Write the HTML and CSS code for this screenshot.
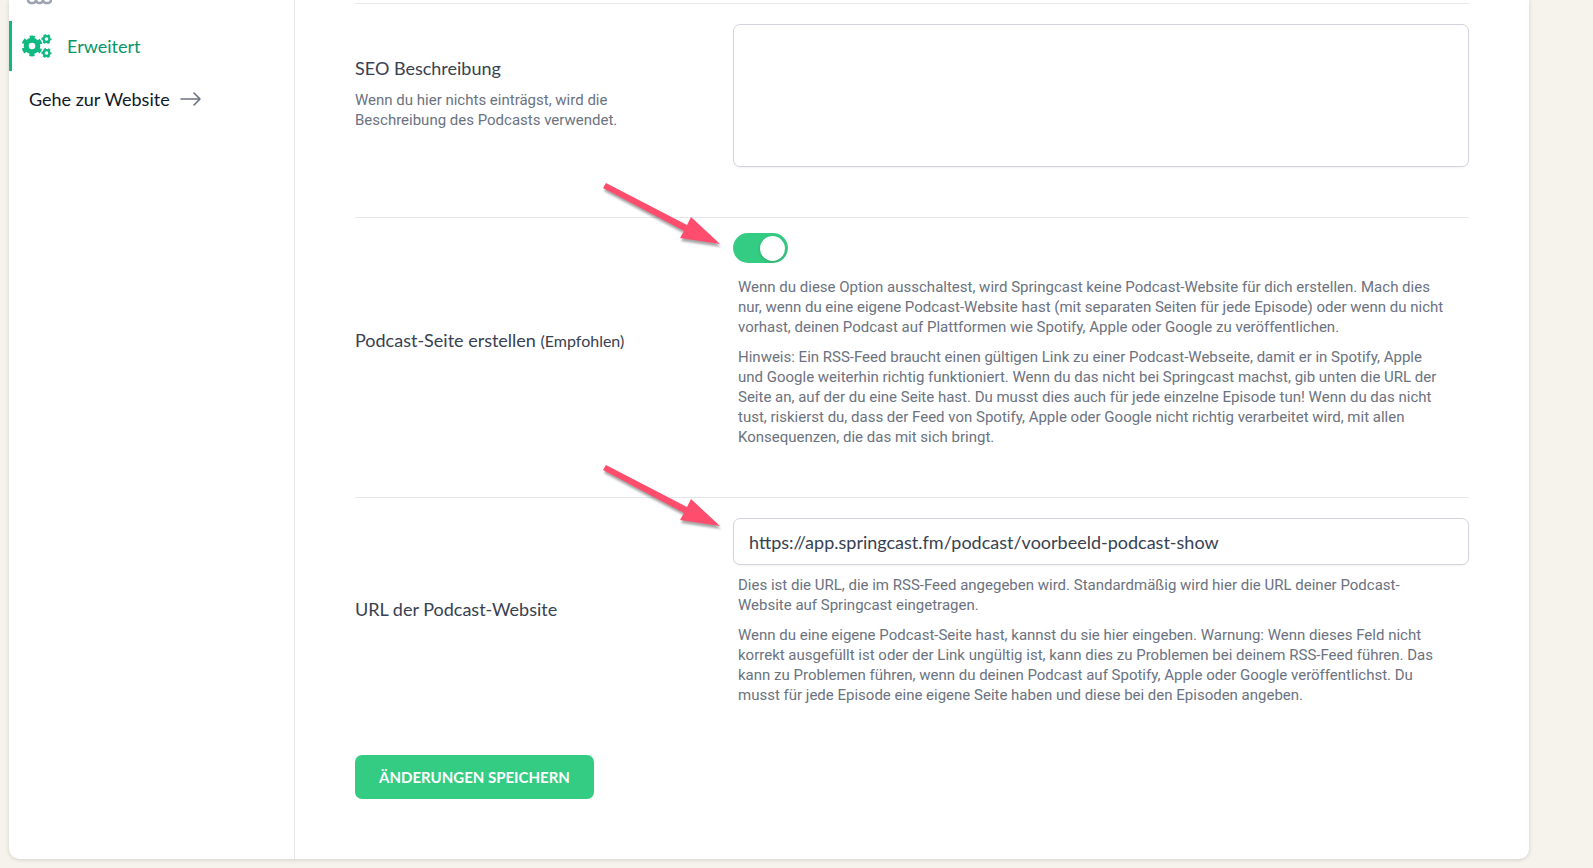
FILE: index.html
```html
<!DOCTYPE html>
<html lang="de">
<head>
    <meta charset="UTF-8">
    <meta name="viewport" content="width=device-width, initial-scale=1.0">
    <title>Podcast Einstellungen</title>
    <link rel="stylesheet" href="styles.css">
</head>
<body>

    <div class="card">
        <nav class="sidebar">
            <a href="#" class="nav-item scrolled" aria-label="Player">
                <svg class="nav-icon" viewBox="0 0 30 30" fill="none" stroke="#9ca3af" stroke-width="2.500">
                    <rect x="6" y="8" width="8" height="17" rx="3"/>
                    <rect x="14" y="8" width="7" height="17" rx="3"/>
                    <rect x="21" y="8" width="8" height="17" rx="3"/>
                </svg>
            </a>
            <a href="#" class="nav-item active">
                <svg class="nav-icon" viewBox="0 0 30 30" fill="none" stroke="#10b981">
                    <circle cx="10" cy="15" r="5.800" stroke-width="5"/>
                    <circle cx="10" cy="15" r="9" stroke-width="3" stroke-dasharray="5 4.425" stroke-dashoffset="2.500" transform="rotate(30 10 15)"/>
                    <circle cx="24.500" cy="8" r="2.900" stroke-width="2.200"/>
                    <circle cx="24.500" cy="8" r="4.300" stroke-width="1.600" stroke-dasharray="2.400 2.100" stroke-dashoffset="1.200"/>
                    <circle cx="24.500" cy="22" r="2.900" stroke-width="2.200"/>
                    <circle cx="24.500" cy="22" r="4.300" stroke-width="1.600" stroke-dasharray="2.400 2.100" stroke-dashoffset="1.200"/>
                </svg>
                Erweitert
            </a>
            <a href="#" class="site-link">
                Gehe zur Website
                <svg width="22" height="16" viewBox="0 0 22 16" fill="none" stroke="#6b7280" stroke-width="1.600" stroke-linecap="round" stroke-linejoin="round">
                    <path d="M1 8h19M14 2l6 6-6 6"/>
                </svg>
            </a>
        </nav>

        <form class="settings">
            <div class="row">
                <div class="row-label">
                    <label for="seo">SEO Beschreibung</label>
                    <p class="help">Wenn du hier nichts einträgst, wird die<br> Beschreibung des Podcasts verwendet.</p>
                </div>
                <textarea id="seo" class="field"></textarea>
            </div>

            <div class="row row-toggle">
                <svg class="arrow" viewBox="0 0 122 70">
                    <path d="M4 1L85 43L89 35L118 62L78 56L82 49L1 6Z"/>
                </svg>
                <div class="row-label">
                    <label for="site">Podcast-Seite erstellen <small>(Empfohlen)</small></label>
                </div>
                <div>
                    <input type="checkbox" id="site" class="toggle" checked>
                    <div class="notes">
                        <p class="help">Wenn du diese Option ausschaltest, wird Springcast keine Podcast-Website für dich erstellen. Mach dies<br> nur, wenn du eine eigene Podcast-Website hast (mit separaten Seiten für jede Episode) oder wenn du nicht<br> vorhast, deinen Podcast auf Plattformen wie Spotify, Apple oder Google zu veröffentlichen.</p>
                        <p class="help">Hinweis: Ein RSS-Feed braucht einen gültigen Link zu einer Podcast-Webseite, damit er in Spotify, Apple<br> und Google weiterhin richtig funktioniert. Wenn du das nicht bei Springcast machst, gib unten die URL der<br> Seite an, auf der du eine Seite hast. Du musst dies auch für jede einzelne Episode tun! Wenn du das nicht<br> tust, riskierst du, dass der Feed von Spotify, Apple oder Google nicht richtig verarbeitet wird, mit allen<br> Konsequenzen, die das mit sich bringt.</p>
                    </div>
                </div>
            </div>

            <div class="row">
                <svg class="arrow" viewBox="0 0 122 70">
                    <path d="M4 1L85 43L89 35L118 62L78 56L82 49L1 6Z"/>
                </svg>
                <div class="row-label">
                    <label for="url">URL der Podcast-Website</label>
                </div>
                <div>
                    <input type="text" id="url" class="field" value="https://app.springcast.fm/podcast/voorbeeld-podcast-show">
                    <div class="notes">
                        <p class="help">Dies ist die URL, die im RSS-Feed angegeben wird. Standardmäßig wird hier die URL deiner Podcast-<br>Website auf Springcast eingetragen.</p>
                        <p class="help">Wenn du eine eigene Podcast-Seite hast, kannst du sie hier eingeben. Warnung: Wenn dieses Feld nicht<br> korrekt ausgefüllt ist oder der Link ungültig ist, kann dies zu Problemen bei deinem RSS-Feed führen. Das<br> kann zu Problemen führen, wenn du deinen Podcast auf Spotify, Apple oder Google veröffentlichst. Du<br> musst für jede Episode eine eigene Seite haben und diese bei den Episoden angeben.</p>
                    </div>
                </div>
            </div>

            <button type="submit" class="save">ÄNDERUNGEN SPEICHERN</button>
        </form>
    </div>

</body>
</html>
```
FILE: styles.css
```css
* {
    box-sizing: border-box;
}

body {
    margin: 0;
    font-family: Lato, sans-serif;
    font-size: 18px;
    line-height: 24px;
    color: #374151;
    background: #f6f3ec;
}

p {
    margin: 0;
}

/* Card */
.card {
    display: flex;
    margin: 0 64px 9px 9px;
    background: #fff;
    border-radius: 0 0 10px 10px;
    box-shadow: 0 1px 4px rgba(0, 0, 0, 0.15);
}

/* Sidebar */
.sidebar {
    flex: 0 0 286px;
    border-right: 1px solid #e5e7eb;
}

.nav-item {
    display: flex;
    align-items: center;
    gap: 15px;
    height: 50px;
    padding-left: 10px;
    border-left: 3px solid transparent;
    color: #059669;
    text-decoration: none;
}

.nav-item.active {
    border-color: #10b981;
}

.nav-item.scrolled {
    margin: -32px 0 3px;
}

.nav-icon {
    width: 30px;
    height: 30px;
}

.site-link {
    display: flex;
    align-items: center;
    gap: 10px;
    margin: 16px 0 0 20px;
    color: #111827;
    text-decoration: none;
}

/* Settings form */
.settings {
    flex: 1;
    padding: 3px 60px 60px;
}

.row {
    position: relative;
    display: grid;
    grid-template-columns: 1fr 2fr;
    gap: 10px;
    align-items: center;
    padding: 20px 0 50px;
    border-top: 1px solid #e5e7eb;
}

.row-toggle {
    padding-top: 15px;
}

.row-label {
    padding-bottom: 6px;
}

.row-toggle .row-label {
    padding-bottom: 0;
}

.row-label .help {
    margin-top: 10px;
}

small {
    font-size: 16px;
}

.help {
    font-family: Roboto, sans-serif;
    font-size: 15px;
    line-height: 20px;
    color: #6b7280;
}

.field {
    display: block;
    width: 100%;
    height: 47px;
    padding: 0 15px;
    border: 1px solid #d1d5db;
    border-radius: 7px;
    font: inherit;
    color: #374151;
    background: #fff;
    box-shadow: 0 1px 2px rgba(0, 0, 0, 0.05);
}

textarea.field {
    height: 143px;
    resize: none;
}

.notes {
    display: grid;
    gap: 10px;
    padding: 10px 0 0 5px;
}

.row-toggle .notes {
    padding-top: 14px;
}

/* Toggle */
.toggle {
    appearance: none;
    display: flex;
    align-items: center;
    justify-content: flex-end;
    width: 55px;
    height: 30px;
    margin: 0;
    padding: 0 3px;
    border-radius: 15px;
    background: #34cc82;
}

.toggle::before {
    content: "";
    width: 25px;
    height: 25px;
    border-radius: 50%;
    background: #fff;
    box-shadow: 0 1px 3px rgba(0, 0, 0, 0.2);
}

/* Arrows pointing at the controls */
.arrow {
    position: absolute;
    left: 247px;
    top: -34px;
    width: 122px;
    height: 70px;
    fill: #ff4d6d;
    filter: drop-shadow(1px 3px 1px rgba(0, 0, 0, 0.35));
    overflow: visible;
}

.row-toggle .arrow {
    top: -36px;
}

.save {
    display: block;
    height: 44px;
    padding: 0 24px;
    border: 0;
    border-radius: 7px;
    font: bold 15px Lato, sans-serif;
    color: #fff;
    background: #34cc82;
}
```
